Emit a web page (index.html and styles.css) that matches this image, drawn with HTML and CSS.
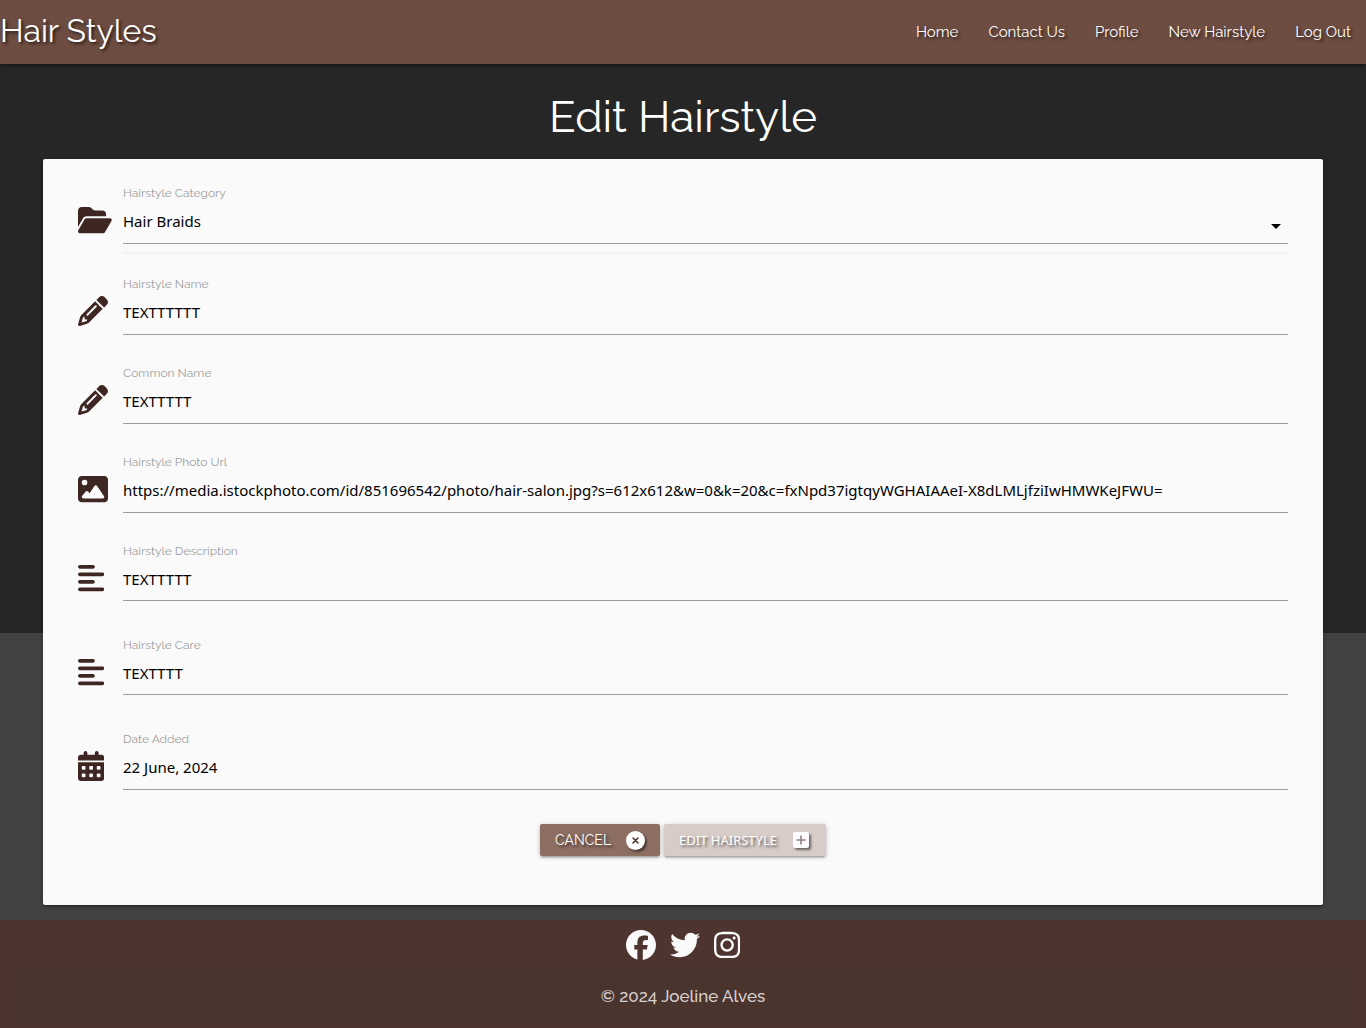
FILE: index.html
```html
<!DOCTYPE html>
<html lang="en">
<head>
<meta charset="utf-8">
<meta name="viewport" content="width=device-width, initial-scale=1">
<title>Edit Hairstyle</title>
<link rel="stylesheet" href="styles.css">
</head>
<body>
<svg class="sprite" aria-hidden="true">
  <symbol id="pencil" viewBox="0 0 512 512"><path d="M410.3 231l11.3-11.3-33.9-33.9-62.1-62.1L291.7 89.8l-11.3 11.3-22.6 22.6L58.6 322.9c-10.4 10.4-18 23.3-22.2 37.4L1 480.7c-2.5 8.4-.2 17.5 6.1 23.7s15.3 8.5 23.7 6.1l120.3-35.4c14.1-4.2 27-11.8 37.4-22.2L387.7 253.7 410.3 231zM160 399.4l-9.1 22.7c-4 3.1-8.5 5.4-13.3 6.9L59.4 452l23-78.1c1.4-4.9 3.8-9.4 6.9-13.3l22.7-9.1v32c0 8.8 7.2 16 16 16h32zM362.7 18.7L348.3 33.2 325.7 55.8 314.3 67.1l33.9 33.9 62.1 62.1 33.9 33.9 11.3-11.3 22.6-22.6 14.5-14.5c25-25 25-65.5 0-90.5L453.3 18.7c-25-25-65.5-25-90.5 0zm-47.4 168l-144 144c-6.2 6.2-16.4 6.2-22.6 0s-6.2-16.4 0-22.6l144-144c6.2-6.2 16.4-6.2 22.6 0s6.2 16.4 0 22.6z"/></symbol>
  <symbol id="align-left" viewBox="0 0 448 512"><path d="M288 64c0 17.7-14.3 32-32 32H32C14.3 96 0 81.7 0 64S14.3 32 32 32H256c17.7 0 32 14.3 32 32zm0 256c0 17.7-14.3 32-32 32H32c-17.7 0-32-14.3-32-32s14.3-32 32-32H256c17.7 0 32 14.3 32 32zM0 192c0-17.7 14.3-32 32-32H416c17.7 0 32 14.3 32 32s-14.3 32-32 32H32c-17.7 0-32-14.3-32-32zM448 448c0 17.7-14.3 32-32 32H32c-17.7 0-32-14.3-32-32s14.3-32 32-32H416c17.7 0 32 14.3 32 32z"/></symbol>
</svg>

<header class="navbar">
  <a class="brand" href="#">Hair Styles</a>
  <nav class="nav-links">
    <a href="#">Home</a>
    <a href="#">Contact Us</a>
    <a href="#">Profile</a>
    <a href="#">New Hairstyle</a>
    <a href="#">Log Out</a>
  </nav>
</header>

<main class="page">
  <h1 class="title">Edit Hairstyle</h1>
  <form class="card">
    <div class="field field-select">
      <svg class="icon" viewBox="0 0 576 512" aria-hidden="true"><path d="M88.7 223.8L0 375.8V96C0 60.7 28.7 32 64 32H181.5c17 0 33.3 6.7 45.3 18.7l26.5 26.5c12 12 28.3 18.7 45.3 18.7H416c35.3 0 64 28.7 64 64v32H144c-22.8 0-43.8 12.1-55.3 31.8zm27.6 16.1C122.1 230 132.6 224 144 224H544c11.5 0 22 6.1 27.7 16.1s5.7 22.2-.1 32.1l-112 192C453.9 474 443.4 480 432 480H32c-11.5 0-22-6.1-27.7-16.1s-5.7-22.2 .1-32.1l112-192z"/></svg>
      <div class="control">
        <label for="category">Hairstyle Category</label>
        <select id="category"><option>Hair Braids</option></select>
        <svg class="caret" viewBox="0 0 10 5" aria-hidden="true"><path d="M0 0h10L5 5z"/></svg>
      </div>
    </div>
    <div class="field">
      <svg class="icon" viewBox="0 0 512 512" aria-hidden="true"><use href="#pencil"/></svg>
      <div class="control">
        <label for="name">Hairstyle Name</label>
        <input id="name" type="text" value="TEXTTTTTT">
      </div>
    </div>
    <div class="field">
      <svg class="icon" viewBox="0 0 512 512" aria-hidden="true"><use href="#pencil"/></svg>
      <div class="control">
        <label for="common">Common Name</label>
        <input id="common" type="text" value="TEXTTTTT">
      </div>
    </div>
    <div class="field">
      <svg class="icon" viewBox="0 0 512 512" aria-hidden="true"><path d="M0 96C0 60.7 28.7 32 64 32H448c35.3 0 64 28.7 64 64V416c0 35.3-28.7 64-64 64H64c-35.3 0-64-28.7-64-64V96zM323.8 202.5c-4.5-6.6-11.9-10.5-19.8-10.5s-15.4 3.9-19.8 10.5l-87 127.6L170.7 297c-4.6-5.7-11.5-9-18.7-9s-14.2 3.3-18.7 9l-64 80c-5.8 7.2-6.9 17.1-2.9 25.4s12.4 13.6 21.6 13.6h96 32H424c8.9 0 17.1-4.9 21.2-12.8s3.6-17.4-1.4-24.7l-120-176zM112 192a48 48 0 1 0 0-96 48 48 0 1 0 0 96z"/></svg>
      <div class="control">
        <label for="photo">Hairstyle Photo Url</label>
        <input id="photo" type="text" value="https://media.istockphoto.com/id/851696542/photo/hair-salon.jpg?s=612x612&amp;w=0&amp;k=20&amp;c=fxNpd37igtqyWGHAIAAeI-X8dLMLjfziIwHMWKeJFWU=">
      </div>
    </div>
    <div class="field field-area">
      <svg class="icon" viewBox="0 0 448 512" aria-hidden="true"><use href="#align-left"/></svg>
      <div class="control">
        <label for="description">Hairstyle Description</label>
        <textarea id="description" rows="1">TEXTTTTT</textarea>
      </div>
    </div>
    <div class="field field-area">
      <svg class="icon" viewBox="0 0 448 512" aria-hidden="true"><use href="#align-left"/></svg>
      <div class="control">
        <label for="care">Hairstyle Care</label>
        <textarea id="care" rows="1">TEXTTTT</textarea>
      </div>
    </div>
    <div class="field">
      <svg class="icon" viewBox="0 0 448 512" aria-hidden="true"><path fill-rule="evenodd" d="M128 0c17.700 0 32 14.300 32 32V64H288V32c0-17.700 14.300-32 32-32s32 14.300 32 32V64h48c26.500 0 48 21.500 48 48v48H0V112C0 85.500 21.500 64 48 64H96V32c0-17.700 14.300-32 32-32zM0 192H448V464c0 26.500-21.500 48-48 48H48c-26.500 0-48-21.500-48-48zM80 256a16 16 0 0 0-16 16v32a16 16 0 0 0 16 16h32a16 16 0 0 0 16-16v-32a16 16 0 0 0-16-16zM208 256a16 16 0 0 0-16 16v32a16 16 0 0 0 16 16h32a16 16 0 0 0 16-16v-32a16 16 0 0 0-16-16zM336 256a16 16 0 0 0-16 16v32a16 16 0 0 0 16 16h32a16 16 0 0 0 16-16v-32a16 16 0 0 0-16-16zM80 384a16 16 0 0 0-16 16v32a16 16 0 0 0 16 16h32a16 16 0 0 0 16-16v-32a16 16 0 0 0-16-16zM208 384a16 16 0 0 0-16 16v32a16 16 0 0 0 16 16h32a16 16 0 0 0 16-16v-32a16 16 0 0 0-16-16zM336 384a16 16 0 0 0-16 16v32a16 16 0 0 0 16 16h32a16 16 0 0 0 16-16v-32a16 16 0 0 0-16-16z"/></svg>
      <div class="control">
        <label for="date">Date Added</label>
        <input id="date" type="text" value="22 June, 2024">
      </div>
    </div>
    <div class="actions">
      <button class="btn btn-cancel" type="button">Cancel
        <svg class="btn-icon" viewBox="0 0 19 19" aria-hidden="true"><circle cx="9.500" cy="9.500" r="9.500" fill="#fff"/><path d="M7 7l5 5M12 7l-5 5" stroke="#4e342e" stroke-width="1.600" stroke-linecap="round"/></svg>
      </button>
      <button class="btn btn-submit" type="submit">Edit Hairstyle
        <svg class="btn-icon" viewBox="0 0 19 19" aria-hidden="true"><rect x="1" y="1" width="16" height="16" rx="2" fill="#fff"/><path d="M9 5v8M5 9h8" stroke="#8d7a85" stroke-width="1.500" stroke-linecap="round"/></svg>
      </button>
    </div>
  </form>
</main>

<footer class="footer">
  <div class="social">
    <a href="#" aria-label="Facebook"><svg viewBox="0 0 512 512"><path d="M512 256C512 114.600 397.400 0 256 0S0 114.600 0 256C0 376 82.700 476.800 194.200 504.500V334.200H141.400V256h52.800V222.300c0-87.100 39.400-127.500 125-127.500c16.200 0 44.200 3.200 55.700 6.400V172c-6-.6-16.500-1-29.600-1c-42 0-58.200 15.900-58.200 57.200V256h83.600l-14.400 78.200H287V510.100C413.800 494.800 512 386.900 512 256z"/></svg></a>
    <a href="#" aria-label="Twitter"><svg viewBox="0 0 512 512"><path d="M459.370 151.716c.325 4.548.325 9.097.325 13.645 0 138.720-105.583 298.558-298.558 298.558-59.452 0-114.680-17.219-161.137-47.106 8.447.974 16.568 1.299 25.340 1.299 49.055 0 94.213-16.568 130.274-44.832-46.132-.975-84.792-31.188-98.112-72.772 6.498.974 12.995 1.624 19.818 1.624 9.421 0 18.843-1.300 27.614-3.573-48.081-9.747-84.143-51.980-84.143-102.985v-1.299c13.969 7.797 30.214 12.670 47.431 13.319-28.264-18.843-46.781-51.005-46.781-87.391 0-19.492 5.197-37.360 14.294-52.954 51.655 63.675 129.300 105.258 216.365 109.807-1.624-7.797-2.599-15.918-2.599-24.040 0-57.828 46.782-104.934 104.934-104.934 30.213 0 57.502 12.670 76.670 33.137 23.715-4.548 46.456-13.320 66.599-25.340-7.798 24.366-24.366 44.833-46.132 57.827 21.117-2.273 41.584-8.122 60.426-16.243-14.292 20.791-32.161 39.308-52.628 54.253z"/></svg></a>
    <a href="#" aria-label="Instagram"><svg viewBox="0 0 448 512"><path d="M224.100 141c-63.600 0-114.900 51.300-114.900 114.900s51.300 114.900 114.900 114.900S339 319.500 339 255.900 287.700 141 224.100 141zm0 189.600c-41.100 0-74.700-33.500-74.700-74.700s33.500-74.700 74.700-74.700 74.700 33.500 74.700 74.700-33.600 74.700-74.700 74.700zm146.400-194.300c0 14.900-12 26.800-26.800 26.800-14.900 0-26.800-12-26.800-26.800s12-26.800 26.800-26.800 26.800 12 26.800 26.800zm76.100 27.200c-1.700-35.900-9.900-67.700-36.200-93.900-26.200-26.200-58-34.400-93.900-36.200-37-2.100-147.900-2.100-184.900 0-35.800 1.700-67.600 9.900-93.900 36.100s-34.400 58-36.200 93.900c-2.100 37-2.100 147.900 0 184.900 1.700 35.900 9.900 67.700 36.200 93.900s58 34.400 93.900 36.200c37 2.100 147.900 2.100 184.900 0 35.900-1.700 67.700-9.900 93.900-36.200 26.200-26.200 34.400-58 36.200-93.900 2.100-37 2.100-147.800 0-184.800zM398.800 388c-7.800 19.600-22.900 34.700-42.600 42.600-29.500 11.700-99.500 9-132.100 9s-102.700 2.600-132.100-9c-19.600-7.800-34.700-22.900-42.600-42.600-11.700-29.500-9-99.500-9-132.100s-2.600-102.700 9-132.100c7.800-19.600 22.900-34.700 42.600-42.600 29.500-11.700 99.500-9 132.100-9s102.700-2.600 132.100 9c19.600 7.800 34.700 22.900 42.600 42.600 11.700 29.500 9 99.500 9 132.100s2.700 102.700-9 132.100z"/></svg></a>
  </div>
  <p class="copyright">© 2024 Joeline Alves</p>
</footer>
</body>
</html>
```

FILE: styles.css
```css
* { box-sizing: border-box; }

body {
  margin: 0;
  min-height: 100vh;
  display: flex;
  flex-direction: column;
  font-family: Raleway, Lato, sans-serif;
  background: #4e342e;
}

.sprite { display: none; }

.navbar {
  position: relative;
  display: flex;
  justify-content: space-between;
  align-items: center;
  height: 64px;
  background: #6d4c41;
  box-shadow: 0 2px 2px rgba(0, 0, 0, .14), 0 3px 1px -2px rgba(0, 0, 0, .12), 0 1px 5px rgba(0, 0, 0, .2);
}

.navbar a {
  color: #fff;
  text-decoration: none;
  text-shadow: 2px 2px 3px rgba(0, 0, 0, .6);
}

.brand { font-size: 32px; line-height: 36px; padding-bottom: 2px; }

.nav-links { display: flex; }
.nav-links a { padding: 0 15px; font-size: 15px; }

.page {
  padding: 22px 43px 15px;
  background: linear-gradient(#262626 66.5%, #424242 66.5%);
}

.title {
  margin: 0;
  padding-bottom: 11px;
  font-size: 44px;
  line-height: 62px;
  font-weight: 400;
  text-align: center;
  color: #fff;
}

.card {
  max-width: 1280px;
  margin: 0 auto;
  padding: 25px 35px 49px;
  border-radius: 2px;
  background: #fafafa;
  box-shadow: 0 2px 2px rgba(0, 0, 0, .14), 0 3px 1px -2px rgba(0, 0, 0, .12), 0 1px 5px rgba(0, 0, 0, .2);
}

.field {
  display: grid;
  grid-template-columns: 45px 1fr;
  margin-bottom: 29px;
}

.icon {
  height: 30px;
  margin-top: 21px;
  fill: #3e2723;
}

.control {
  position: relative;
  display: flex;
  flex-direction: column;
}

.control label {
  font-size: 12px;
  line-height: 18px;
  color: #9e9e9e;
}

.control input,
.control select,
.control textarea {
  appearance: none;
  width: 100%;
  height: 42px;
  margin: 0;
  padding: 0 0 4px;
  border: 0;
  border-bottom: 1px solid #9e9e9e;
  border-radius: 0;
  outline: 0;
  background: transparent;
  color: #000;
  font: 15px "Segoe UI", "Noto Sans", sans-serif;
}

.control textarea {
  height: 41px;
  padding: 8px 0;
  line-height: 22px;
  resize: none;
  overflow: hidden;
}

.field-select { margin-bottom: 21px; }
.field-select .control { padding-bottom: 8px; border-bottom: 2px solid #f2f2f2; }
.field-area { margin-bottom: 35px; }

.caret {
  position: absolute;
  right: 7px;
  top: 40px;
  width: 10px;
  height: 5px;
}

.actions {
  display: flex;
  justify-content: center;
  gap: 4px;
  padding-top: 5px;
}

.btn {
  display: flex;
  align-items: center;
  gap: 15px;
  height: 32px;
  padding: 0 15px;
  border: 0;
  border-radius: 2px;
  color: #fff;
  font: 14px Raleway, Lato, sans-serif;
  text-transform: uppercase;
  text-shadow: 2px 2px 3px rgba(0, 0, 0, .6);
  box-shadow: 0 2px 2px rgba(0, 0, 0, .14), 0 3px 1px -2px rgba(0, 0, 0, .12), 0 1px 5px rgba(0, 0, 0, .2);
}

.btn-cancel { background: #8d6e63; }
.btn-submit { background: #d7ccc8; font: 13px "Segoe UI", "Noto Sans", sans-serif; }

.btn-icon {
  width: 19px;
  height: 19px;
  fill: none;
  filter: drop-shadow(2px 2px 1px rgba(0, 0, 0, .5));
}

.footer {
  flex: 1;
  padding: 10px 15px 5px;
  background: #4e342e;
}

.social {
  display: flex;
  justify-content: center;
  gap: 14px;
}

.social a { display: block; height: 30px; }
.social svg { display: block; height: 30px; fill: #fafafa; }

.copyright {
  margin: 5px 0 0;
  padding-top: 4px;
  background: #4a342e;
  color: #d8d0ce;
  font-size: 17px;
  font-weight: 500;
  line-height: 54px;
  text-align: center;
}
```
